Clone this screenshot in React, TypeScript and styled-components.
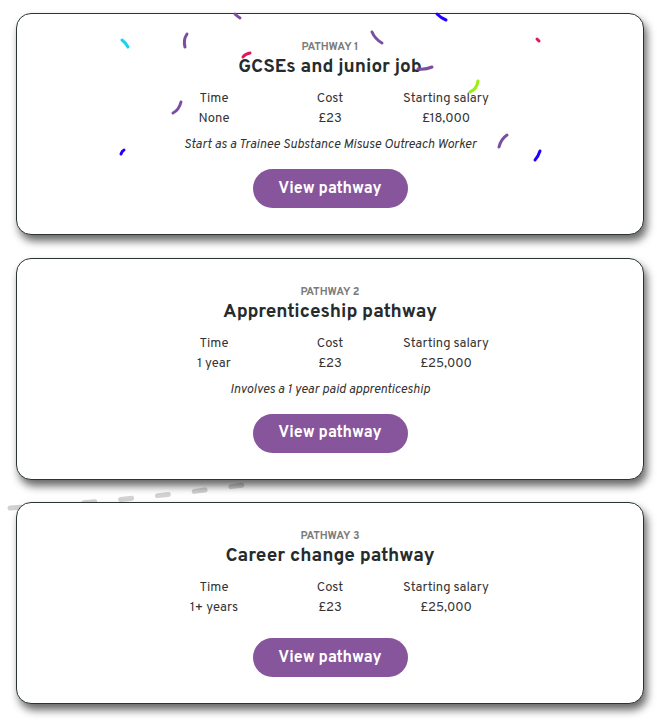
import React from "react"
import styled, { createGlobalStyle } from "styled-components"

type Pathway = {
    id: number;
    title: string;
    time: string;
    cost: string;
    salary: string;
    note?: string;
}

const pathways: Pathway[] = [
    { id: 1, title: "GCSEs and junior job", time: "None", cost: "£23", salary: "£18,000", note: "Start as a Trainee Substance Misuse Outreach Worker" },
    { id: 2, title: "Apprenticeship pathway", time: "1 year", cost: "£23", salary: "£25,000", note: "Involves a 1 year paid apprenticeship" },
    { id: 3, title: "Career change pathway", time: "1+ years", cost: "£23", salary: "£25,000" },
]

// confetti bits sitting over the first card, page coords
const confetti: { d: string; color: string }[] = [
    { d: "M122 40 Q126 43 128 47", color: "#19d3ee" },
    { d: "M187 34 Q183 40 185 47", color: "#7d4e9f" },
    { d: "M235 14 Q237 16 240 18", color: "#7d4e9f" },
    { d: "M243 57 Q245 54 250 53", color: "#e3155a" },
    { d: "M173 113 Q179 110 181 102", color: "#7d4e9f" },
    { d: "M121 154 Q122 151 124 150", color: "#2200ff" },
    { d: "M372 32 Q375 39 382 43", color: "#7d4e9f" },
    { d: "M437 14 Q441 18 446 20", color: "#2200ff" },
    { d: "M418 69 Q425 70 432 67", color: "#7d4e9f" },
    { d: "M537 39 L539 41", color: "#e3155a" },
    { d: "M478 81 Q477 89 470 92", color: "#99f00f" },
    { d: "M507 135 Q501 139 499 147", color: "#7d4e9f" },
    { d: "M540 151 Q538 157 535 160", color: "#2200ff" },
]

const App: React.FC = () => {
    return (
        <Page>
            <GlobalStyle />
            <Trail viewBox="0 0 657 720" width={657} height={720}>
                <path d="M10 508 Q130 501 250 484" stroke="#d2d2d2" strokeWidth={5} strokeLinecap="round" fill="none" strokeDasharray="11 26" />
            </Trail>
            <List>
                {pathways.map(p => (
                    <Card key={p.id}>
                        <Eyebrow>Pathway {p.id}</Eyebrow>
                        <Title>{p.title}</Title>
                        <Stats>
                            <Stat>Time</Stat>
                            <Stat>Cost</Stat>
                            <Stat>Starting salary</Stat>
                            <Stat>{p.time}</Stat>
                            <Stat>{p.cost}</Stat>
                            <Stat>{p.salary}</Stat>
                        </Stats>
                        {p.note && <Note>{p.note}</Note>}
                        <ViewBtn>View pathway</ViewBtn>
                    </Card>
                ))}
            </List>
            <Confetti viewBox="0 0 657 240" width={657} height={240}>
                {confetti.map((c, i) => (
                    <path key={i} d={c.d} stroke={c.color} strokeWidth={3} strokeLinecap="round" fill="none" />
                ))}
            </Confetti>
        </Page>
    )
};

const GlobalStyle = createGlobalStyle`
    body {
        margin: 0;
        background: #ffffff;
        font-family: "Overpass", "Noto Sans", sans-serif;
    }
`;

const Page = styled.div`
    position: relative;
    width: 657px;
    height: 720px;
    overflow: hidden;
`;

const Trail = styled.svg`
    position: absolute;
    top: 0;
    left: 0;
    z-index: 0;
`;

const Confetti = styled.svg`
    position: absolute;
    top: 0;
    left: 0;
    z-index: 2;
    pointer-events: none;
`;

const List = styled.div`
    position: relative;
    z-index: 1;
    display: flex;
    flex-direction: column;
    gap: 22.5px;
    padding: 13px 13px 0 16px;
`;

const Card = styled.div`
    display: flex;
    flex-direction: column;
    align-items: center;
    background: #fff;
    border: 1.5px solid #2b3434;
    border-radius: 15px;
    box-shadow: 3px 6px 9px rgba(0, 0, 0, 0.6);
    padding: 26px 0 26px;
`;

const Eyebrow = styled.div`
    font-size: 11px;
    line-height: 15px;
    font-weight: 700;
    text-transform: uppercase;
    color: #7b7b7b;
`;

const Title = styled.h2`
    margin: 0;
    font-size: 19px;
    line-height: 24px;
    font-weight: 700;
    color: #262b2c;
`;

const Stats = styled.div`
    display: grid;
    grid-template-columns: repeat(3, 116px);
    margin: 10px 0 6px;
`;

const Stat = styled.div`
    text-align: center;
    font-size: 13px;
    line-height: 20px;
    color: #333;
`;

const Note = styled.div`
    font-size: 12.8px;
    line-height: 20px;
    font-style: italic;
    color: #333;
`;

const ViewBtn = styled.button`
    margin-top: 14px;
    width: 155px;
    height: 39px;
    border: none;
    border-radius: 20px;
    background: #87559b;
    color: #fff;
    font-family: inherit;
    font-size: 16px;
    font-weight: 700;
    cursor: pointer;
`;

export default App;
